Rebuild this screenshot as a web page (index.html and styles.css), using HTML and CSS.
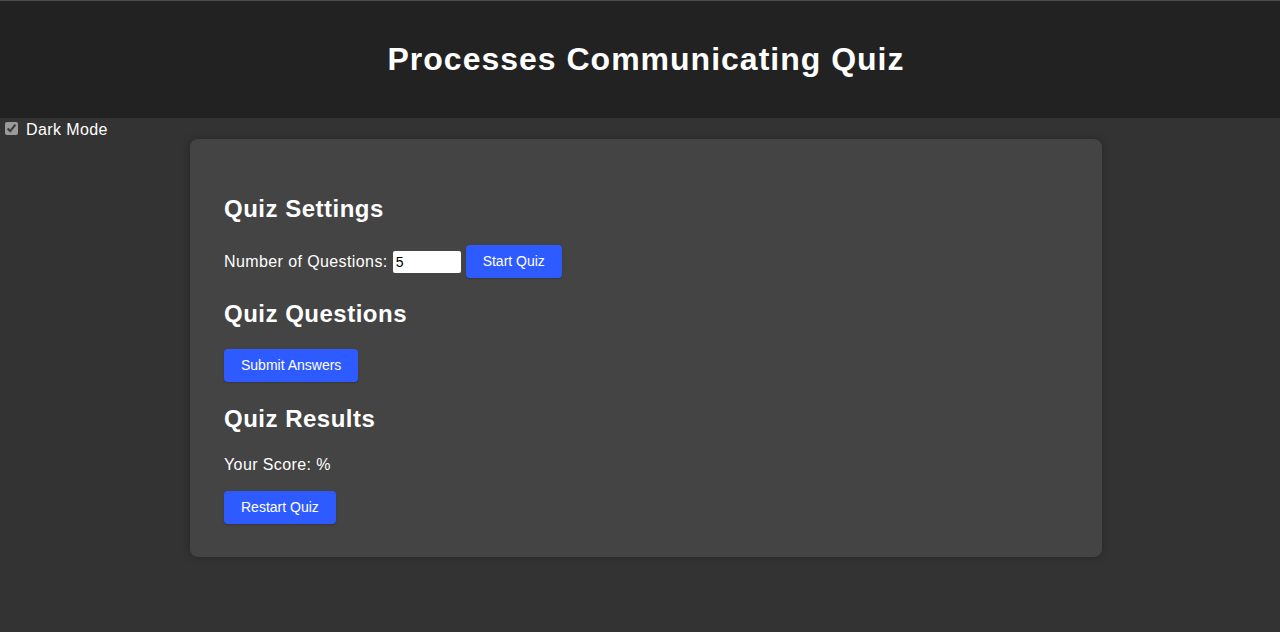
FILE: index.html
```html
<!DOCTYPE html>
<html lang="en">
<head>
<meta charset="utf-8">
<title>Processes Communicating Quiz</title>
<link rel="stylesheet" href="styles.css">
</head>
<body>
<header class="site-header">
  <h1 class="title">Processes Communicating Quiz</h1>
</header>
<label class="mode-toggle"><input type="checkbox" class="mode-check" checked><span class="mode-text">Dark Mode</span></label>
<main class="quiz-card">
  <section class="section">
    <h2 class="section-title first">Quiz Settings</h2>
    <div class="settings-row">
      <span class="field-label">Number of Questions:</span>
      <input type="number" class="num-input" value="5">
      <button class="btn">Start Quiz</button>
    </div>
  </section>
  <section class="section">
    <h2 class="section-title second">Quiz Questions</h2>
    <button class="btn btn-submit">Submit Answers</button>
  </section>
  <section class="section">
    <h2 class="section-title third">Quiz Results</h2>
    <p class="score">Your Score: %</p>
    <button class="btn btn-restart">Restart Quiz</button>
  </section>
</main>
</body>
</html>
```

FILE: styles.css
```css
html, body {
  margin: 0;
  padding: 0;
}
body {
  background: #333333;
  color: #ffffff;
  font-family: "Liberation Sans", Arial, sans-serif;
  font-size: 16px;
  letter-spacing: 0.4px;
  min-height: 632px;
}
.site-header {
  background: #222222;
  border-top: 1px solid #4d4d4d;
  padding: 40px 0;
  text-align: center;
}
.title {
  margin: 0;
  padding-left: 12px;
  font-size: 32px;
  line-height: 37px;
  font-weight: bold;
  letter-spacing: 1px;
}
.mode-toggle {
  display: flex;
  align-items: center;
  gap: 8px;
  height: 21px;
  padding-left: 5px;
  font-size: 16px;
  line-height: 18px;
}
.mode-text {
  padding-top: 2px;
}
.mode-check {
  margin: 0;
  width: 13px;
  height: 13px;
  accent-color: #9a9a9a;
}
.quiz-card {
  display: block;
  margin-left: 190px;
  width: 912px;
  box-sizing: border-box;
  padding: 34px 34px 33px;
  background: #444444;
  border-radius: 8px;
  box-shadow: 0 0 8px rgba(0, 0, 0, 0.25);
}
.section-title {
  margin: 0;
  font-size: 24px;
  line-height: 28px;
  font-weight: bold;
  letter-spacing: 0.5px;
}
.section-title.first {
  margin-top: 22px;
}
.section-title.second {
  margin-top: 22px;
}
.section-title.third {
  margin-top: 23px;
}
.settings-row {
  display: flex;
  align-items: center;
  margin-top: 22px;
  height: 33px;
}
.field-label {
  line-height: 18px;
}
.num-input {
  margin: 0 5px 0 5px;
  width: 68px;
  height: 22px;
  box-sizing: border-box;
  border: none;
  border-radius: 2px;
  padding: 0 3px;
  font-family: "Liberation Sans", Arial, sans-serif;
  font-size: 14px;
  letter-spacing: 0;
  color: #000;
  background: #fff;
}
.btn {
  display: block;
  border: none;
  border-radius: 4px;
  background: #2e5bff;
  color: #ffffff;
  font-family: "Liberation Sans", Arial, sans-serif;
  font-size: 14px;
  line-height: 17px;
  letter-spacing: 0;
  padding: 8px 17px;
  cursor: pointer;
  box-shadow: 0 1px 2px rgba(0, 0, 0, 0.2);
}
.btn-submit {
  margin-top: 21px;
}
.score {
  margin: 23px 0 0;
  line-height: 18px;
}
.btn-restart {
  margin-top: 17px;
}
```
